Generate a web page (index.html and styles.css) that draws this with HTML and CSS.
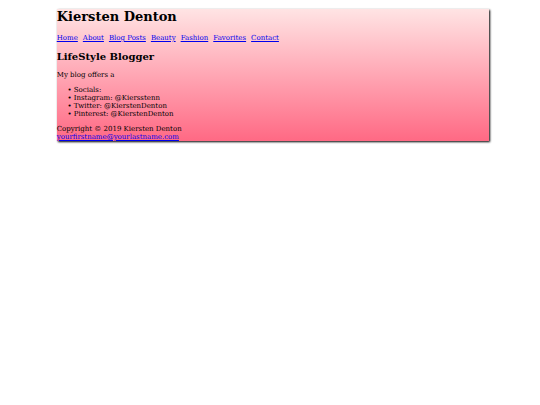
FILE: index.html
```html
<!DOCTYPE html>
<html lang="en">
<head>
  <meta charset="UTF-8">
  <meta name="viewport" content="width=device-width, initial-scale=1.0">
  <title>Kiersten Denton</title>
  <link rel="stylesheet" href="styles.css">
</head>
<body>
  <div id="wrapper">
    <header>
      <h1>Kiersten Denton</h1>
    </header>
    <nav>
      <a href="index.html">Home</a>
      <a href="about.html">About</a>
      <a href="posts.html">Blog Posts</a>
      <a href="beauty.html">Beauty</a>
      <a href="fashion.html">Fashion</a>
      <a href="favorites.html">Favorites</a>
      <a href="contact.html">Contact</a>
    </nav>
    <main>
      <h2>LifeStyle Blogger</h2>
      <p>My blog offers a</p>
      <ul>
        <li>Socials:</li>
        <li>Instagram: @Kiersstenn</li>
        <li>Twitter: @KierstenDenton</li>
        <li>Pinterest: @KierstenDenton</li>
      </ul>
    </main>
    <footer>
      Copyright &copy; 2019 Kiersten Denton<br>
      <a href="mailto:yourfirstname@yourlastname.com">yourfirstname@yourlastname.com</a>
    </footer>
  </div>
</body>
</html>
```

FILE: styles.css
```css
body {
  box-sizing: border-box;
  min-height: 100vh;
  margin: 0;
  padding: 9px 0 9px 6px;
  background-color: #fff;
  color: #000;
  font-family: "DejaVu Serif", serif;
  font-size: 7px;
  line-height: 8px;
}

#wrapper {
  width: 81%;
  margin: 0 auto;
  background-image: linear-gradient(to bottom, #ffe4e4, #ff6984);
  box-shadow: 1px 1px 2px #000;
}

h1 {
  margin: 0 0 9px;
  font-size: 13px;
  line-height: 16px;
}

nav {
  display: flex;
  gap: 5px;
}

h2 {
  margin: 8px 0;
  font-size: 10px;
  line-height: 13px;
}

p {
  margin: 0;
}

ul {
  margin: 7px 0;
  padding-left: 17px;
  list-style-type: "• ";
}

a {
  color: #0000ee;
}
```
